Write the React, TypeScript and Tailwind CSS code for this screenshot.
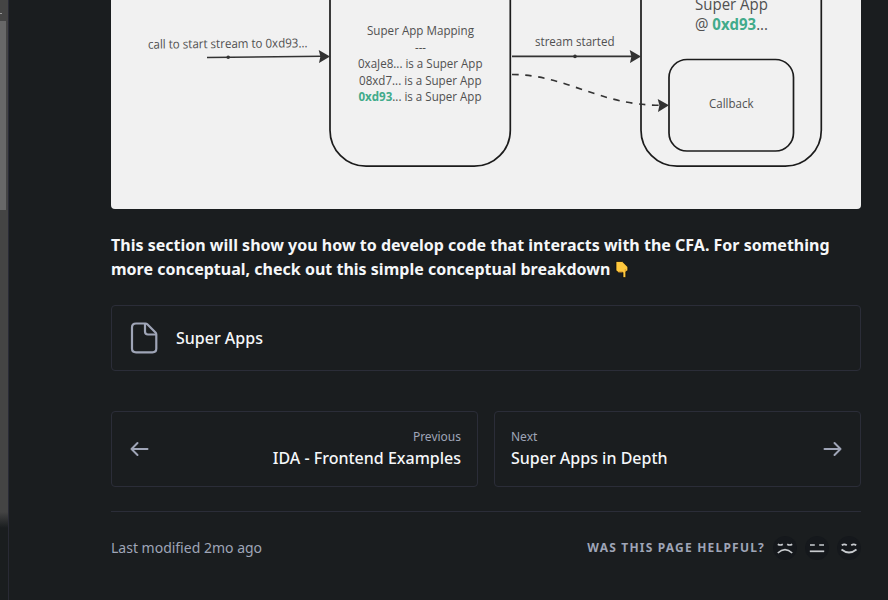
import React from "react";

function Label({ x, y, w, size = 12.5, transform, children }: { x: number; y: number; w: number; size?: number; transform?: string; children: React.ReactNode }) {
  return (
    <text x={x} y={y} textLength={w} lengthAdjust="spacingAndGlyphs" fontSize={size} transform={transform} fill="#505050" fontWeight={400}>
      {children}
    </text>
  );
}

function Hash() {
  return <tspan fill="#41ab8b" fontWeight={700}>0xd93</tspan>;
}

function Diagram() {
  return (
    <svg width="750" height="209" viewBox="111 0 750 209" className="block shrink-0 rounded-b bg-[#f1f1f1] font-['Open_Sans','Noto_Sans',sans-serif]">
      <g fill="none" stroke="#1c1c1c" strokeWidth="1.7">
        <rect x="330" y="-80" width="180.3" height="246.2" rx="36" />
        <rect x="641" y="-80" width="180.3" height="246.2" rx="36" />
        <rect x="669" y="59.5" width="124.5" height="91.5" rx="18" />
      </g>
      <g fill="none" stroke="#333" strokeWidth="1.6">
        <path d="M207 57.5 L322 56.3" />
        <path d="M512 56.4 H633" />
        <path d="M512 74.5 C566 74.5 598 105 660 105.3" strokeDasharray="6.5 6.6" />
      </g>
      <g fill="#333">
        <circle cx="228.2" cy="57.2" r="1.8" />
        <circle cx="575" cy="56.4" r="1.8" />
        <path d="M330 56.4 L318.7 50 L320.4 56.4 L319 63 Z" />
        <path d="M641 56.4 L629.7 50 L631.4 56.4 L630 63 Z" />
        <path d="M669 105.3 L657.7 98.9 L659.4 105.3 L658 111.9 Z" />
      </g>
      <Label x={148} y={48} w={159.5} transform="rotate(-0.5 228 48)">call to start stream to 0xd93...</Label>
      <Label x={367} y={35} w={107}>Super App Mapping</Label>
      <Label x={415} y={51.5} w={11}>---</Label>
      <Label x={358} y={68} w={124.5}>0xaJe8... is a Super App</Label>
      <Label x={359} y={84.5} w={122.5}>08xd7... is a Super App</Label>
      <Label x={358.5} y={101} w={123}><Hash />... is a Super App</Label>
      <Label x={535} y={46} w={79.5}>stream started</Label>
      <Label x={695} y={9.6} w={73} size={15.5}>Super App</Label>
      <Label x={695} y={29.7} w={73} size={15.5}>@ <Hash />...</Label>
      <Label x={709} y={108} w={44.5}>Callback</Label>
    </svg>
  );
}

function PointDown() {
  return (
    <svg width="16" height="18" viewBox="0 0 16 18" className="ml-1 inline-block align-[-4px]" aria-label="👇">
      <path d="M2 0.5 H8.3 L13.8 6 V9.6 L11.8 10.6 V16.6 H9 V11.4 H4.4 L2 9.6 Z" fill="#ffc83d" stroke="#0c0a08" strokeWidth="0.7" />
      <path d="M4.6 11 H8.5 M11.3 10.4 V8" stroke="#d6902d" strokeWidth="0.8" fill="none" />
    </svg>
  );
}

function Arrow({ flip = false }: { flip?: boolean }) {
  return (
    <svg width="20" height="16" viewBox="0 0 20 16" className={flip ? "-scale-x-100" : ""} fill="none" stroke="#9fa5b7" strokeWidth="2" strokeLinecap="round" strokeLinejoin="round">
      <path d="M17.5 8 H1.5 M7.5 2 L1.5 8 L7.5 14" />
    </svg>
  );
}

function Face({ eyes, mouth }: { eyes: string; mouth: string }) {
  return (
    <button className="flex size-6 items-center justify-center rounded-full bg-[#15181c]">
      <svg width="24" height="24" viewBox="0 0 24 24" fill="none" stroke="#c8cbcf" strokeWidth="1.7">
        <path d={eyes} />
        <path d={mouth} />
      </svg>
    </button>
  );
}

export default function App() {
  return (
    <div className="flex h-[600px] w-[888px] overflow-hidden bg-[#1a1d1f] font-['Noto_Sans',sans-serif] text-[#f5f7f9]">
      <aside className="flex w-[9px] shrink-0 flex-col border-r border-[#292a35]">
        <div className="flex h-[21px] items-start bg-[#444]">
          <i className="mt-[13px] h-px w-0.5 bg-[#999]" />
        </div>
        <div className="flex h-[189px] bg-[#444]">
          <div className="w-1.5 bg-[#686868]" />
        </div>
        <div className="h-[302px] bg-[#444]" />
        <div className="h-4 bg-linear-to-b from-[#444] to-[#1a1d1f]" />
      </aside>
      <main className="ml-[102px] flex w-[750px] flex-col">
        <Diagram />
        <p className="mt-6 h-12 text-base leading-6 font-bold tracking-[0.01px] whitespace-nowrap">
          This section will show you how to develop code that interacts with the CFA. For something
          <br />
          more conceptual, check out this simple conceptual breakdown<PointDown />
        </p>
        <a className="mt-6 flex h-[66px] shrink-0 items-center rounded border border-[#2b2d38] pl-[18px]">
          <svg width="30" height="32" viewBox="0 0 30 32" fill="none" stroke="#9fa5b7" strokeWidth="2.2" strokeLinejoin="round">
            <path d="M6 1.5 H15.5 Q16.5 1.5 17.3 2.3 L25.5 10.5 Q26.3 11.3 26.3 12.5 V26.5 Q26.3 30.3 22.5 30.3 H6 Q2 30.3 2 26.5 V5.5 Q2 1.5 6 1.5 Z" />
            <path d="M15 1.5 V9.5 Q15 12.5 18 12.5 H26.3" />
          </svg>
          <span className="ml-4 text-base font-medium">Super Apps</span>
        </a>
        <nav className="mt-10 grid h-[76px] shrink-0 grid-cols-2 gap-4">
          <a className="flex items-center justify-between rounded border border-[#2b2d38] pr-4 pl-[18px]">
            <Arrow />
            <span className="flex flex-col items-end">
              <span className="text-xs leading-[18px] text-[#9fa5b7]">Previous</span>
              <span className="text-base leading-6 font-medium">IDA - Frontend Examples</span>
            </span>
          </a>
          <a className="flex items-center justify-between rounded border border-[#2b2d38] pr-[18px] pl-4">
            <span className="flex flex-col">
              <span className="text-xs leading-[18px] text-[#9fa5b7]">Next</span>
              <span className="text-base leading-6 font-medium">Super Apps in Depth</span>
            </span>
            <Arrow flip />
          </a>
        </nav>
        <footer className="mt-6 flex h-[73px] items-center justify-between border-t border-[#2b2d38] text-[#9fa5b7]">
          <span className="text-sm">Last modified 2mo ago</span>
          <div className="flex items-center gap-2">
            <span className="text-xs font-bold tracking-[1.2px]">WAS THIS PAGE HELPFUL?</span>
            <Face eyes="M4.8 8.2 Q7.3 9.8 9.8 8.2 M14.2 8.2 Q16.7 9.8 19.2 8.2" mouth="M4.8 17 Q12 10.3 19.2 17" />
            <Face eyes="M5 9 H9.8 M14.2 9 H19" mouth="M4.8 15.3 H19.2" />
            <Face eyes="M4.8 9.3 Q7.3 7.5 9.8 9.3 M14.2 9.3 Q16.7 7.5 19.2 9.3" mouth="M4.5 13.5 Q12 19.5 19.5 13.5" />
          </div>
        </footer>
      </main>
    </div>
  );
}
